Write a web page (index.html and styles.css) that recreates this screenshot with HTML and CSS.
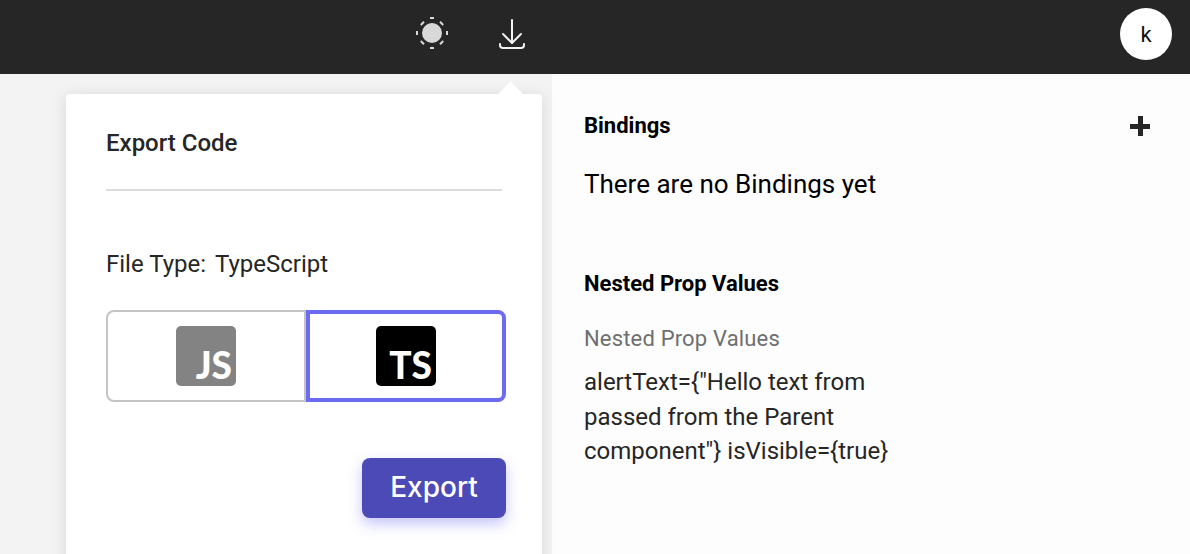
FILE: index.html
```html
<!DOCTYPE html>
<html lang="en">
<head>
  <meta charset="UTF-8"/>
  <title>Export Code</title>
  <link rel="stylesheet" href="styles.css">
</head>
<body>
  <header class="topbar">
    <div class="topbar-icons">
      <svg class="icon-theme" width="34" height="34" viewBox="0 0 34 34" fill="none">
        <circle cx="17" cy="17" r="10" fill="#d8d8d8"/>
        <g stroke="#d8d8d8" stroke-width="2">
          <path d="M15 2h4M15 32h4M2 15v4M32 15v4"/>
          <path d="M5.800 9l3.200-3.200M25 5.800l3.200 3.200M5.800 25l3.200 3.200M25 28.200l3.200-3.200"/>
        </g>
      </svg>
      <svg class="icon-download" width="30" height="34" viewBox="0 0 30 34" fill="none" stroke="#f2f2f2" stroke-width="2" stroke-linecap="round" stroke-linejoin="round">
        <path d="M15 3v23"/>
        <path d="M6 17l9 9 9-9"/>
        <path d="M3 27v1a3 3 0 0 0 3 3h18a3 3 0 0 0 3-3v-1"/>
      </svg>
    </div>
    <div class="avatar">k</div>
  </header>

  <main class="content">
    <section class="left-pane">
      <div class="popover">
        <h2 class="popover-title">Export Code</h2>
        <div class="file-type"><span>File Type:</span><span>TypeScript</span></div>
        <div class="type-toggle">
          <button class="type-option">
            <span class="lang-badge lang-js">JS</span>
          </button>
          <button class="type-option selected">
            <span class="lang-badge lang-ts">TS</span>
          </button>
        </div>
        <div class="popover-actions">
          <button class="export-btn">Export</button>
        </div>
      </div>
    </section>

    <aside class="side-panel">
      <div class="panel-head">
        <h3>Bindings</h3>
        <span class="add-icon"></span>
      </div>
      <p class="empty-text">There are no Bindings yet</p>
      <h3 class="nested-title">Nested Prop Values</h3>
      <div class="nested-label">Nested Prop Values</div>
      <p class="nested-value">alertText={"Hello text from passed from the Parent component"} isVisible={true}</p>
    </aside>
  </main>
</body>
</html>
```

FILE: styles.css
```css
* {
  box-sizing: border-box;
}

html,
body {
  height: 100%;
}

body {
  margin: 0;
  overflow: hidden;
  display: flex;
  flex-direction: column;
  font-family: 'Roboto', sans-serif;
  background: #f3f3f3;
  color: #262626;
}

.topbar {
  height: 74px;
  flex-shrink: 0;
  background: #262626;
  display: flex;
  align-items: center;
  justify-content: space-between;
  padding: 0 18px 8px 415px;
}

.topbar-icons {
  display: flex;
  align-items: center;
  gap: 48px;
}

.icon-download {
  margin-top: 2px;
}

.avatar {
  width: 52px;
  height: 52px;
  margin-top: 2px;
  border-radius: 50%;
  background: #fff;
  color: #111;
  font-size: 22px;
  display: flex;
  align-items: center;
  justify-content: center;
}

.content {
  flex: 1;
  display: flex;
  min-height: 0;
}

.left-pane {
  width: 552px;
  flex-shrink: 0;
  padding: 20px 10px 0 66px;
}

.popover {
  position: relative;
  height: 480px;
  background: #fff;
  border-radius: 4px;
  padding: 36px 40px 0 40px;
  box-shadow: 0 2px 16px rgba(0, 0, 0, 0.12);
}

.popover::before {
  content: "";
  position: absolute;
  top: -9px;
  left: 436px;
  width: 17px;
  height: 17px;
  background: #fff;
  transform: rotate(45deg);
}

.popover-title {
  position: relative;
  margin: 0;
  height: 61px;
  font-size: 24px;
  line-height: 27px;
  font-weight: 500;
  color: #262626;
  border-bottom: 2px solid #dcdcdc;
}

.file-type {
  display: flex;
  gap: 9px;
  margin-top: 59px;
  font-size: 24px;
  line-height: 28px;
}

.type-toggle {
  display: flex;
  margin: 32px -4px 0 0;
  height: 92px;
}

.type-option {
  flex: 0 0 50%;
  background: #fff;
  border: 2px solid #c4c4c4;
  display: flex;
  align-items: center;
  justify-content: center;
  padding: 0;
}

.type-option:first-child {
  border-radius: 8px 0 0 8px;
}

.type-option.selected {
  border: 4px solid #6c6cf0;
  border-radius: 0 8px 8px 0;
}

.lang-badge {
  width: 60px;
  height: 60px;
  border-radius: 5px;
  display: flex;
  align-items: flex-end;
  justify-content: flex-end;
  padding: 0 4px 0 0;
  color: #fff;
  font-family: 'Lato', sans-serif;
  font-size: 37px;
  line-height: 43px;
  font-weight: 900;
}

.lang-js {
  background: #838383;
}

.lang-ts {
  background: #000;
}

.popover-actions {
  display: flex;
  justify-content: flex-end;
  margin: 56px -4px 0 0;
}

.export-btn {
  width: 144px;
  height: 60px;
  border: 0;
  border-radius: 8px;
  background: #4c4ab6;
  color: #fff;
  padding: 0 0 3px;
  font-family: 'Inter', sans-serif;
  font-size: 28px;
  font-weight: 500;
  box-shadow: 0 6px 14px rgba(90, 90, 240, 0.35);
}

.side-panel {
  flex: 1;
  background: #fdfdfd;
  padding: 39px 40px 0 32px;
  color: #000;
}

.panel-head {
  display: flex;
  align-items: center;
  justify-content: space-between;
}

h3 {
  margin: 0;
  font-size: 22px;
  line-height: 25px;
  font-weight: 700;
}

.add-icon {
  width: 20px;
  height: 20px;
  margin-top: 1px;
  background:
    linear-gradient(#262626, #262626) center / 20px 5px no-repeat,
    linear-gradient(#262626, #262626) center / 5px 20px no-repeat;
}

.empty-text {
  margin: 31px 0 0;
  font-size: 26px;
  line-height: 30px;
}

.nested-title {
  margin-top: 72px;
}

.nested-label {
  margin-top: 30px;
  font-size: 22px;
  line-height: 26px;
  letter-spacing: 0.17px;
  color: #6f6f6f;
}

.nested-value {
  margin: 13px 0 0;
  width: 320px;
  font-size: 24px;
  line-height: 34.500px;
  color: #262626;
}
```
